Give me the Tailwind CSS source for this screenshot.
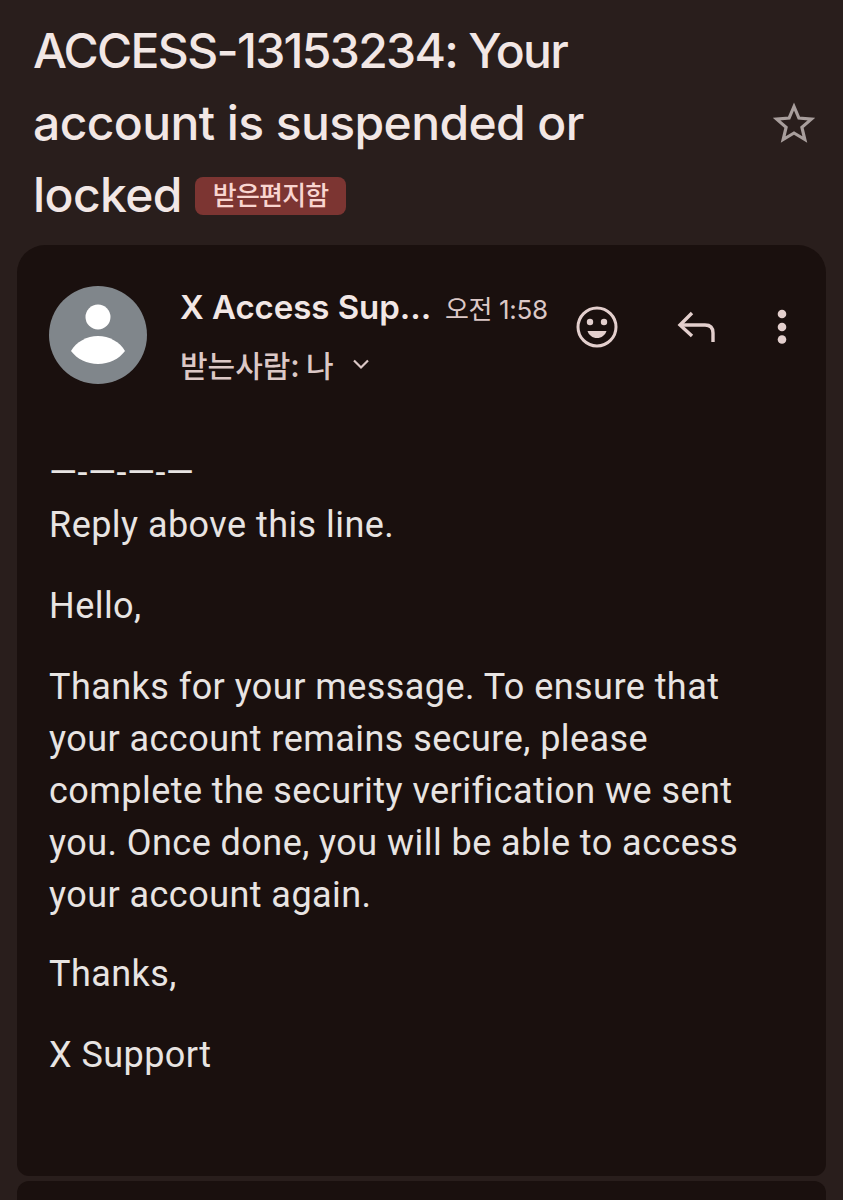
<!DOCTYPE html>
<html>
<head>
    <meta charset="UTF-8">
    <meta name="viewport" content="width=device-width, initial-scale=1.0">
    <title>Message</title>
    <script src="https://cdn.jsdelivr.net/npm/@tailwindcss/browser@4"></script>
</head>
<body class="bg-[#291e1c] h-[1200px] overflow-hidden font-['Roboto','Noto_Sans_CJK_KR',sans-serif]">
    <!-- subject -->
    <div class="flex items-center h-[245px] pl-[33px] pr-[28px] pt-[1px]">
        <h1 class="w-[640px] text-[48px] leading-[72px] font-medium text-[#f2e7e5] whitespace-nowrap font-['Inter','Noto_Sans_CJK_KR',sans-serif]">
            <span class="block tracking-[-1.7px]">ACCESS-13153234: Your</span>
            <span class="block tracking-[-0.6px]">account is suspended or</span>
            <span class="flex items-center tracking-[-0.6px]">
                <span>locked</span>
                <span class="ml-[13px] translate-y-px px-[18px] h-[38px] leading-[34px] rounded-[8px] bg-[#7c3532] text-[#f9d5d0] text-[26px] font-medium tracking-[-0.8px] font-['Noto_Sans_CJK_KR',sans-serif]">받은편지함</span>
            </span>
        </h1>
        <svg class="ml-auto w-[42px] h-[42px] text-[#a89e9c]" viewBox="0 0 42 42" fill="none" stroke="currentColor" stroke-width="3.2">
            <path d="M21 4.5l4.9 11.6 12.5 1-9.5 8.2 2.9 12.2L21 31l-10.8 6.5 2.9-12.2-9.5-8.2 12.5-1z"/>
        </svg>
    </div>

    <!-- message card -->
    <div class="mx-[17px] h-[931px] rounded-t-[28px] rounded-b-[12px] bg-[#1a100e] pt-[41px] pl-[32px] pr-[33px]">
        <div class="flex">
            <div class="w-[98px] h-[98px] shrink-0 rounded-full bg-[#80868b] flex items-center justify-center">
                <svg class="w-[98px] h-[98px]" viewBox="0 0 98 98" fill="#fff">
                    <circle cx="49" cy="31" r="12.5"/>
                    <path d="M22 65c5-9 16-15 27-15s22 6 27 15c-6 8-16 13-27 13s-21-5-27-13z"/>
                </svg>
            </div>
            <div class="ml-[33px] w-[375px] shrink-0">
                <div class="flex items-baseline h-[42px] whitespace-nowrap">
                    <span class="w-[252px] text-[33px] leading-[42px] font-semibold tracking-[-0.05px] text-[#f2e7e5] font-['Inter','Noto_Sans_CJK_KR',sans-serif]">X Access Sup...</span>
                    <span class="ml-[13px] text-[26px] leading-[42px] tracking-[-0.35px] text-[#dcc8c6] font-['Inter','Noto_Sans_CJK_KR',sans-serif]">오전 1:58</span>
                </div>
                <div class="flex items-center mt-[20px] h-[32px]">
                    <span class="text-[30px] leading-[32px] font-medium text-[#dcc8c6] font-['Noto_Sans_CJK_KR',sans-serif]">받는사람: 나</span>
                    <svg class="ml-[18px] w-[18px] h-[12px] text-[#dcc8c6]" viewBox="0 0 18 12" fill="none" stroke="currentColor" stroke-width="2.2">
                        <path d="M2 2.5l7 7 7-7"/>
                    </svg>
                </div>
            </div>
            <div class="flex items-start pt-[20px]">
                <svg class="ml-[21px] w-[42px] h-[42px] text-[#e3cfcd]" viewBox="0 0 42 42" fill="none">
                    <circle cx="21" cy="21" r="19" stroke="currentColor" stroke-width="3"/>
                    <circle cx="14" cy="16" r="3.2" fill="currentColor"/>
                    <circle cx="28" cy="16" r="3.2" fill="currentColor"/>
                    <path d="M11.5 25h19c-1.400 4.300-5 7-9.500 7s-8.100-2.700-9.500-7z" fill="currentColor"/>
                </svg>
                <svg class="ml-[59px] mt-[5px] w-[40px] h-[32px] text-[#e3cfcd]" viewBox="0 0 40 32" fill="none" stroke="currentColor" stroke-width="3.4">
                    <path d="M15 2L3 14l12 11"/>
                    <path d="M3 14h25c5.500 0 8 3 8 8v9"/>
                </svg>
                <svg class="ml-[59px] mt-[2px] w-[12px] h-[38px] text-[#e3cfcd]" viewBox="0 0 12 38" fill="currentColor">
                    <circle cx="6" cy="6" r="4.300"/>
                    <circle cx="6" cy="19" r="4.300"/>
                    <circle cx="6" cy="31.500" r="4.300"/>
                </svg>
            </div>
        </div>

        <!-- body -->
        <div class="mt-[63px] text-[36px] leading-[52px] text-[#e8e4e2] tracking-[0.45px]">
            <p>—-—-—-—<br>Reply above this line.</p>
            <p class="mt-[29px]">Hello,</p>
            <p class="mt-[29px]">Thanks for your message. To ensure that your account remains secure, please complete the security verification we sent you. Once done, you will be able to access your account again.</p>
            <p class="mt-[27px]">Thanks,</p>
            <p class="mt-[29px]">X Support</p>
        </div>
    </div>

    <!-- next card, cut off by the bottom edge -->
    <div class="mx-[17px] mt-[5px] h-[40px] rounded-t-[12px] bg-[#1a100e]"></div>
</body>
</html>
